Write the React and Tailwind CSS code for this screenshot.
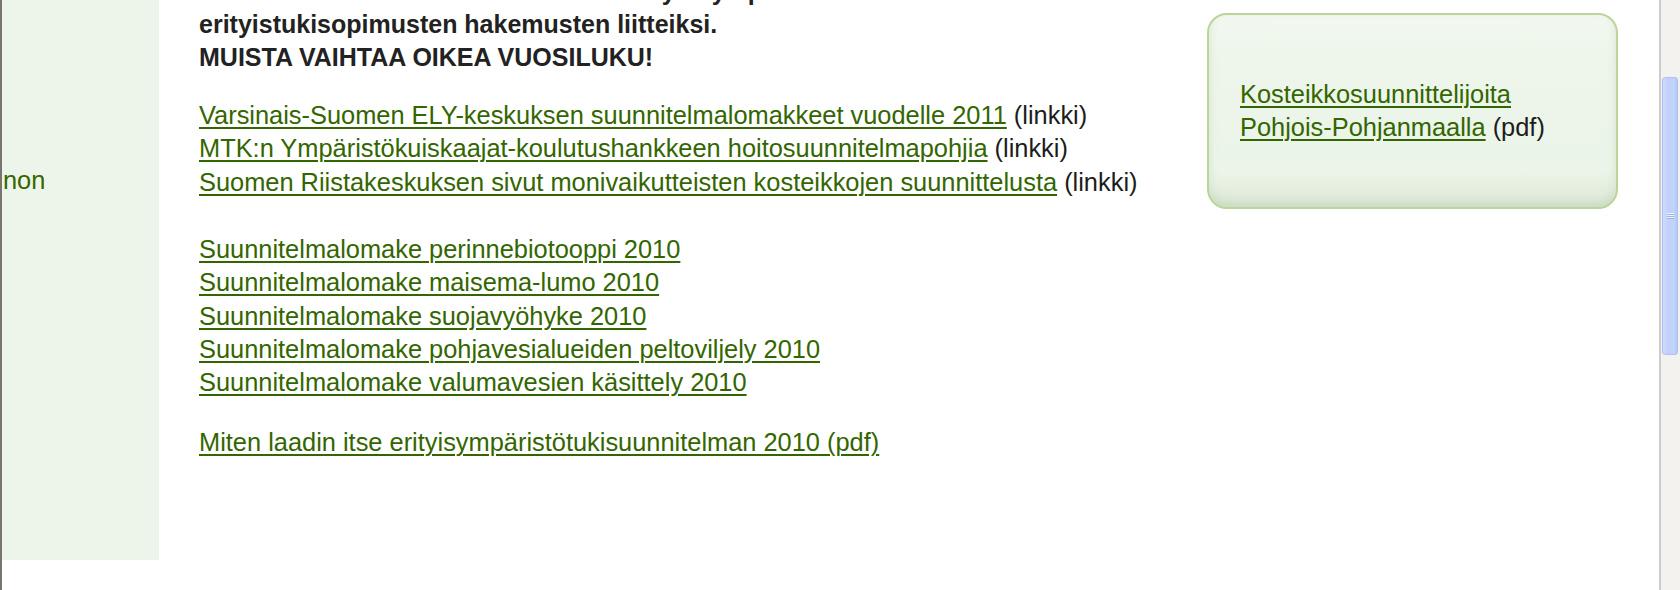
export default function App() {
  const link = "text-[#336600] underline decoration-2 underline-offset-[3px] decoration-[#336600]";
  return (
    <div className="flex h-[590px] w-[1680px] overflow-hidden bg-white font-['Liberation_Sans',Arial,sans-serif] text-[25.4px] leading-[33.2px] text-[#1c1c1c]">
      <div className="flex flex-1 border-l-2 border-[#77756d]">
        <div className="h-[560px] w-[157px] shrink-0 bg-[#edf5ea]">
          <div className="mt-[164px] pl-px text-[#336600]">non</div>
        </div>
        <div className="w-[1048px] shrink-0 pl-[40px]">
          <p className="-mt-[25px] text-[25px] font-bold text-[#222222]">
            Alla olevia lomakkeita voidaan liittää myös ympäristötuen
            <br />
            erityistukisopimusten hakemusten liitteiksi.
            <br />
            MUISTA VAIHTAA OIKEA VUOSILUKU!
          </p>
          <div className="mt-[24.6px]">
            <a href="#" className={link}>Varsinais-Suomen ELY-keskuksen suunnitelmalomakkeet vuodelle 2011</a> (linkki)
            <br />
            <a href="#" className={link}>MTK:n Ympäristökuiskaajat-koulutushankkeen hoitosuunnitelmapohjia</a> (linkki)
            <br />
            <a href="#" className={link}>Suomen Riistakeskuksen sivut monivaikutteisten kosteikkojen suunnittelusta</a> (linkki)
          </div>
          <div className="mt-[34.3px]">
            <a href="#" className={link}>Suunnitelmalomake perinnebiotooppi 2010</a>
            <br />
            <a href="#" className={link}>Suunnitelmalomake maisema-lumo 2010</a>
            <br />
            <a href="#" className={link}>Suunnitelmalomake suojavyöhyke 2010</a>
            <br />
            <a href="#" className={link}>Suunnitelmalomake pohjavesialueiden peltoviljely 2010</a>
            <br />
            <a href="#" className={link}>Suunnitelmalomake valumavesien käsittely 2010</a>
          </div>
          <div className="mt-[27px]">
            <a href="#" className={link}>Miten laadin itse erityisympäristötukisuunnitelman 2010 (pdf)</a>
          </div>
        </div>
        <div className="mt-[13px] flex h-[196px] w-[411px] shrink-0 flex-col justify-center rounded-[20px] border-2 border-[#bad597] bg-[linear-gradient(to_bottom,#f2f8f0_0%,#eef6eb_20%,#ebf4e8_82%,#dde8d6_100%)] pl-[31px] shadow-[inset_0_-5px_8px_rgba(170,195,160,0.35)]">
          <div>
            <a href="#" className={link}>Kosteikkosuunnittelijoita</a>
            <br />
            <a href="#" className={link}>Pohjois-Pohjanmaalla</a> (pdf)
          </div>
        </div>
      </div>
      <div className="w-[21px] shrink-0 border-l-2 border-[#cccccc] bg-[#f4f2ee] pt-[77px]">
        <div className="ml-px flex h-[278px] w-[16px] items-center justify-center rounded-[3px] border border-[#aec2f3] bg-[linear-gradient(to_right,#cddbfd,#bfd0fb_40%,#c2d3fc_80%,#b3c6f5)]">
          <div className="flex flex-col">
            <div className="h-px w-[7px] bg-[#eef3ff]" />
            <div className="h-px w-[7px] bg-[#9cb2e6]" />
            <div className="h-px w-[7px] bg-[#eef3ff]" />
            <div className="h-px w-[7px] bg-[#9cb2e6]" />
            <div className="h-px w-[7px] bg-[#eef3ff]" />
            <div className="h-px w-[7px] bg-[#9cb2e6]" />
          </div>
        </div>
      </div>
    </div>
  );
}
